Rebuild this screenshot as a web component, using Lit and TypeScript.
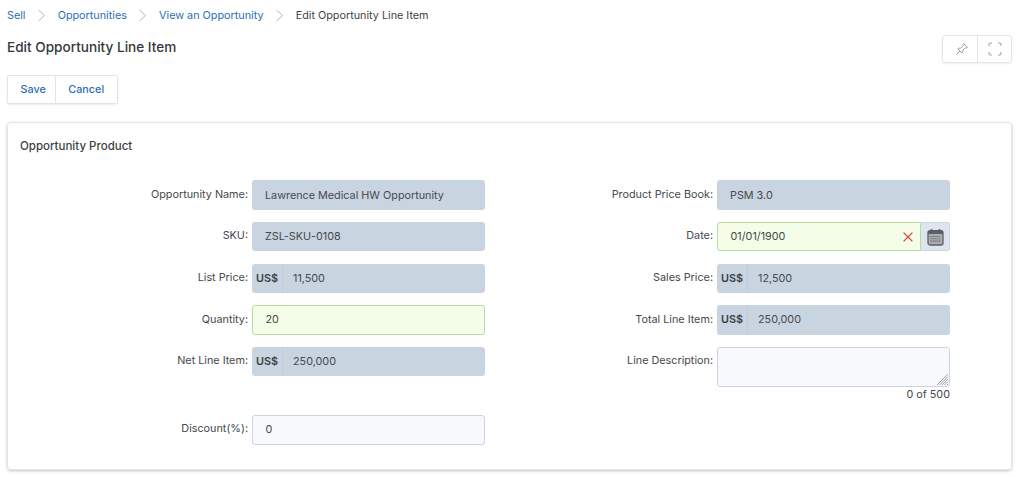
import { LitElement, html, css } from "lit";
import { customElement } from "lit/decorators.js";

const chevron = html`<svg class="chev" width="9" height="13" viewBox="0 0 9 13"><path d="M1.5 1 L7.5 6.5 L1.5 12" fill="none" stroke="#b4b8bd" stroke-width="1"/></svg>`;

@customElement("app-root")
export class AppRoot extends LitElement {
  static styles = css`
    :host { display: block; width: 1016px; height: 477px; overflow: hidden; background: #fff; font-family: Inter, "Liberation Sans", sans-serif; font-size: 10.8px; color: #3f4347; box-sizing: border-box; }
    * { box-sizing: border-box; }
    .page { padding: 8px 4px 0 7px; }
    .crumbs { display: flex; align-items: center; height: 15px; gap: 11.6px; }
    .crumbs a { color: #2a6eb5; text-decoration: none; }
    .head { display: flex; justify-content: space-between; align-items: flex-start; margin-top: 8px; height: 46px; }
    h1 { margin: 6px 0 0; font-size: 13.6px; font-weight: 500; color: #33373b; line-height: 20px; }
    .tools { display: flex; margin-top: 4px; height: 28px; border: 1px solid #e1e5ee; border-radius: 3px; box-shadow: 0 1px 2px rgba(40,60,90,.08); }
    .tools span { width: 34px; display: flex; align-items: center; justify-content: center; }
    .tools .pin { padding-left: 3px; }
    .tools span + span { border-left: 1px solid #dfe3ec; }
    .actions { display: inline-flex; height: 29px; border: 1px solid #dfe4ee; border-radius: 2px; box-shadow: 0 1px 2px rgba(40,60,90,.1); vertical-align: top; margin-top: -2px; }
    .actions button { border: 0; background: #fff; font: 500 10.8px Inter, "Liberation Sans", sans-serif; color: #2a6eb5; padding: 0 12.5px; }
    .actions .save { padding: 0 9px 0 12.5px; }
    .actions button + button { border-left: 1px solid #dfe4ee; }
    .bar { height: 45px; }
    .card { width: 1005px; height: 348px; border: 1px solid #e3e5e8; border-radius: 4px; box-shadow: 0 1px 3px rgba(30,40,60,.28); padding: 15px 12px 0; }
    h2 { margin: 0; font-size: 11.5px; font-weight: 500; color: #3b3f43; line-height: 16px; }
    .form { display: grid; grid-template-columns: 465px 465px; row-gap: 12.1px; margin-top: 26.4px; }
    .row { display: grid; grid-template-columns: 228px 233px; column-gap: 4px; align-items: start; }
    .lbl { text-align: right; line-height: 14px; padding-top: 7.4px; color: #45494d; }
    .f { height: 29.5px; border-radius: 3px; display: flex; align-items: center; padding-left: 13px; color: #45494d; }
    .ro { background: #c9d4e1; }
    .ok { background: #f3fde7; border: 1px solid #b5dda2; padding-left: 12.5px; }
    .in { background: #f7f9fc; border: 1px solid #cbd4e2; padding-left: 12.5px; }
    .cur { padding: 0; }
    .cur b { width: 31px; height: 100%; display: flex; align-items: center; justify-content: center; font-weight: 600; border-right: 1px solid #c1ccd9; color: #3c4045; }
    .cur em { font-style: normal; padding-left: 10px; }
    .date { display: flex; height: 29.5px; }
    .date .f { flex: 1; border-radius: 3px 0 0 3px; justify-content: space-between; padding-right: 7px; }
    .cal { width: 29px; border: 1px solid #cbd4e2; border-left: 0; border-radius: 0 3px 3px 0; background: #dfe5ef; display: flex; align-items: center; justify-content: center; }
    .ta { position: relative; height: 40px; border: 1px solid #cbd4e2; border-radius: 3px; background: #f7f9fc; }
    .grip { position: absolute; right: 0; bottom: 0; }
    .count { text-align: right; line-height: 14px; margin-top: 1px; color: #45494d; }
    .tall { min-height: 56.2px; }
  `;

  private row(label: string, field: unknown) {
    return html`<div class="row"><div class="lbl">${label}:</div><div>${field}</div></div>`;
  }
  private ro(v: string) { return html`<div class="f ro">${v}</div>`; }
  private cur(v: string) { return html`<div class="f ro cur"><b>US$</b><em>${v}</em></div>`; }

  render() {
    return html`<div class="page">
      <nav class="crumbs"><a>Sell</a>${chevron}<a>Opportunities</a>${chevron}<a>View an Opportunity</a>${chevron}<span>Edit Opportunity Line Item</span></nav>
      <div class="head">
        <h1>Edit Opportunity Line Item</h1>
        <div class="tools">
          <span class="pin"><svg width="14" height="14" viewBox="0 0 14 14" fill="none" stroke="#9a9ea4" stroke-width="1"><path d="M8.6 1.5 L12.5 5.4 L11.6 6 L10.3 5.8 L7.8 8.3 L7.9 10.3 L7 11 L3 7 L3.7 6.1 L5.7 6.2 L8.2 3.7 L8 2.4 Z"/><path d="M5 9 L1.5 12.5"/></svg></span>
          <span><svg width="14" height="14" viewBox="0 0 14 14" fill="none" stroke="#a0a4aa" stroke-width="1.1"><path d="M1 4 V2.5 A1.5 1.5 0 0 1 2.5 1 H4 M10 1 H11.5 A1.5 1.5 0 0 1 13 2.5 V4 M13 10 V11.5 A1.5 1.5 0 0 1 11.5 13 H10 M4 13 H2.5 A1.5 1.5 0 0 1 1 11.5 V10"/></svg></span>
        </div>
      </div>
      <div class="bar"><div class="actions"><button class="save">Save</button><button>Cancel</button></div></div>
      <section class="card">
        <h2>Opportunity Product</h2>
        <div class="form">
          ${this.row("Opportunity Name", this.ro("Lawrence Medical HW Opportunity"))}
          ${this.row("Product Price Book", this.ro("PSM 3.0"))}
          ${this.row("SKU", this.ro("ZSL-SKU-0108"))}
          ${this.row("Date", html`<div class="date"><div class="f ok"><span>01/01/1900</span>
            <svg width="10" height="10" viewBox="0 0 10 10" fill="none" stroke="#e0403c" stroke-width="1.3"><path d="M.6 .6 L9.4 9.4 M9.4 .6 L.6 9.4"/></svg></div>
            <div class="cal"><svg width="17" height="18" viewBox="0 0 17 18"><rect x="1" y="2.6" width="15" height="14.4" rx="2" fill="#a9adb2" stroke="#5c6065" stroke-width="1.3"/><rect x="1" y="3" width="15" height="3" fill="#5c6065"/><path d="M4.5 1 V4 M12.5 1 V4" stroke="#5c6065" stroke-width="1.5"/><path d="M3.2 8.5 H13.8 M3.2 10.8 H13.8 M3.2 13.1 H13.8" stroke="#6b6f74" stroke-width="1.1" stroke-dasharray="1.4 .7"/></svg></div></div>`)}
          ${this.row("List Price", this.cur("11,500"))}
          ${this.row("Sales Price", this.cur("12,500"))}
          ${this.row("Quantity", html`<div class="f ok">20</div>`)}
          ${this.row("Total Line Item", this.cur("250,000"))}
          ${this.row("Net Line Item", this.cur("250,000"))}
          ${this.row("Line Description", html`<div class="tall"><div class="ta"><svg class="grip" width="13" height="13" viewBox="0 0 13 13" stroke="#85898d" stroke-width=".8"><path d="M1 12 L12 1 M3.5 12 L12 3.5 M6 12 L12 6 M8.5 12 L12 8.5 M11 12 L12 11"/></svg></div><div class="count">0 of 500</div></div>`)}
          ${this.row("Discount(%)", html`<div class="f in">0</div>`)}
        </div>
      </section>
    </div>`;
  }
}
